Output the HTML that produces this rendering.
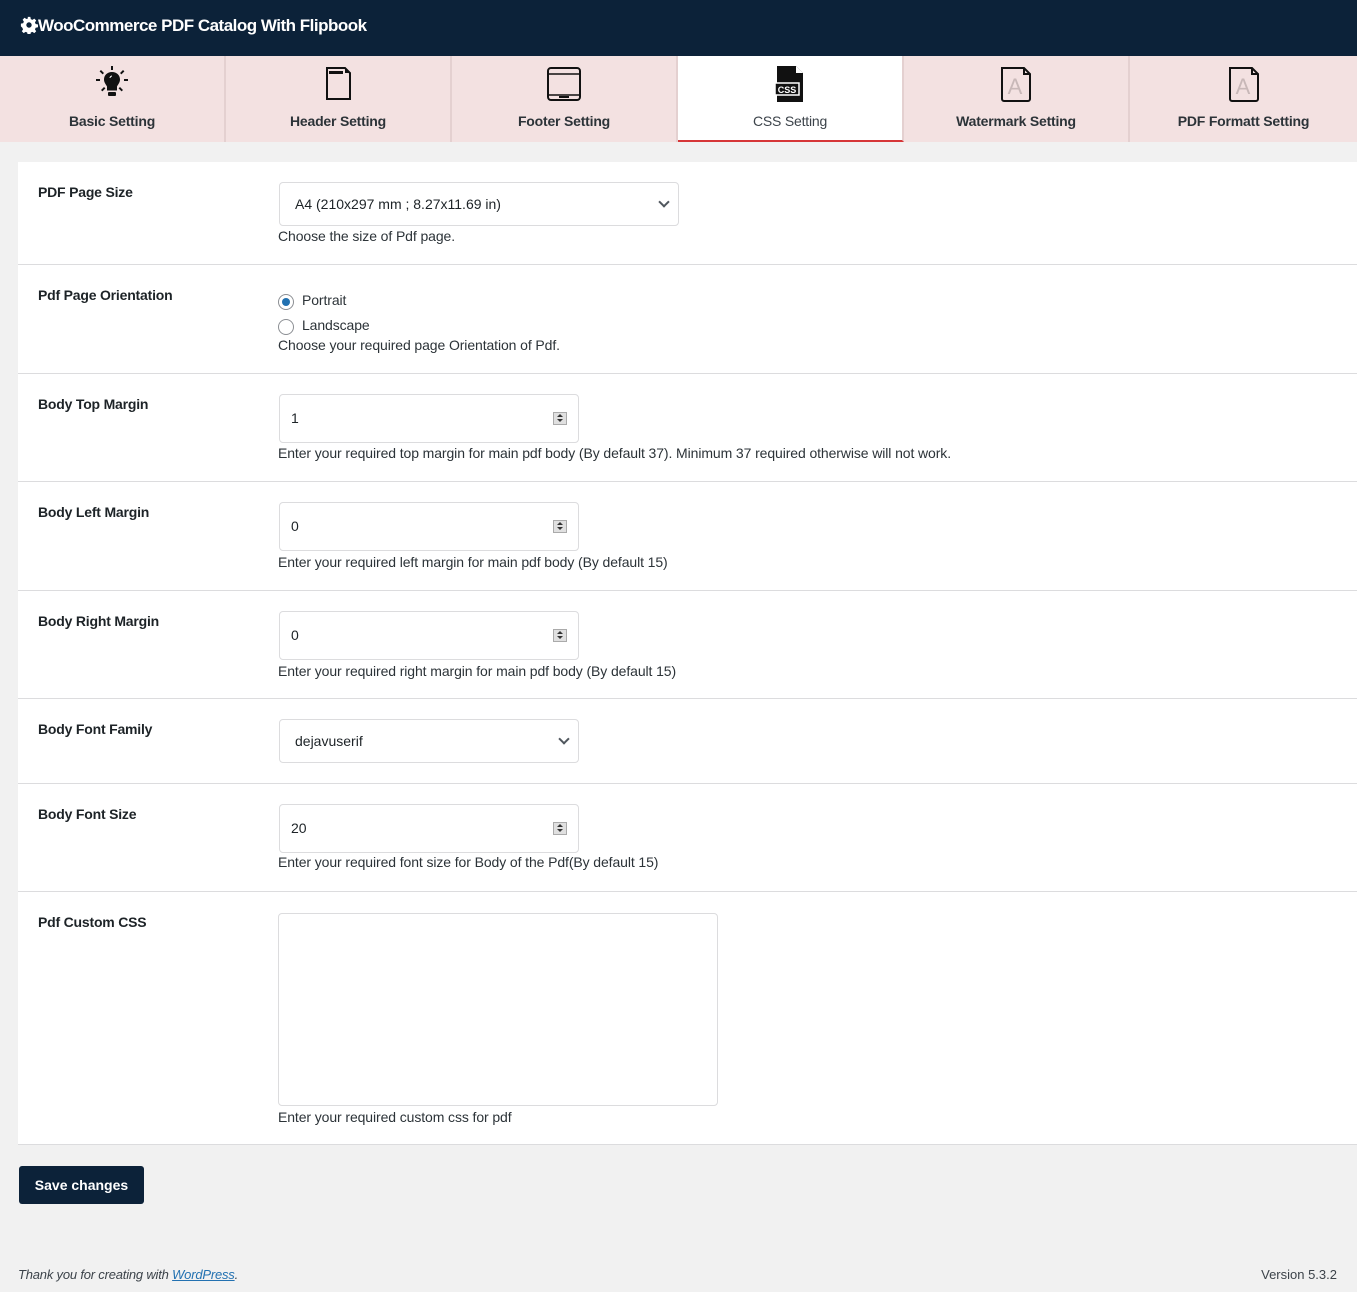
<!DOCTYPE html>
<html><head><meta charset="utf-8"><style>
*{box-sizing:border-box;margin:0;padding:0}
body{width:1357px;height:1292px;background:#f1f1f1;font-family:"Liberation Sans",sans-serif;font-size:14px;color:#1d2327;position:relative;overflow:hidden}
.hdr{position:absolute;left:0;top:0;width:1357px;height:56px;background:#0c2239;color:#fff;font-size:17px;font-weight:bold;padding:16px 0 0 20px;letter-spacing:-0.5px}
.tabs{position:absolute;left:0;top:56px;width:1357px;height:86px;background:#f3e1e1}
.tab{position:absolute;top:0;height:86px;width:226px;border-right:2px solid #e4d0d0;text-align:center}
.tab .lbl{position:absolute;top:57px;left:0;right:0;font-size:14px;font-weight:bold;color:#2c3338;letter-spacing:-0.2px}
.tab svg{position:absolute;top:10px;left:50%;margin-left:-18px}
.tab.act{background:#fff;border-bottom:2px solid #d63638}
.tab.act .lbl{font-weight:normal;color:#3c434a}
.panel{position:absolute;left:18px;top:162px;width:1339px;height:983px;background:#fff}
.row{position:absolute;left:0;width:1339px;border-bottom:1px solid #dcdcde}
.lab{position:absolute;left:20px;font-weight:bold;font-size:14px;letter-spacing:-0.2px}
.inp{position:absolute;width:300px;height:49px;border:1px solid #dcdcde;border-radius:4px;padding:15px 11px;font-size:14px}
.spin{position:absolute;right:11px;top:17px;width:14px;height:13px;background:#e0e0e0;border:1px solid #aaa}
.spin:before{content:"";position:absolute;left:3px;top:1px;border:3px solid transparent;border-bottom:3px solid #333;border-top:0}
.spin:after{content:"";position:absolute;left:3px;top:6px;border:3px solid transparent;border-top:3px solid #333;border-bottom:0}
.desc{position:absolute;font-size:14px;color:#2c3338;white-space:nowrap;letter-spacing:-0.1px}
.chev{position:absolute;right:10px;top:15px;width:8px;height:8px;border-right:2px solid #50575e;border-bottom:2px solid #50575e;transform:rotate(45deg)}
.radio{position:absolute;width:16px;height:16px;border:1px solid #8c8f94;border-radius:50%}
</style></head><body>
<div class="hdr"><svg width="18" height="18" viewBox="0 0 20 20" style="vertical-align:-3px"><path fill="#fff" d="M8.5 1h3l.5 2.5 1.8.8 2.1-1.4 2.1 2.1-1.4 2.1.8 1.8 2.6.6v3l-2.6.5-.8 1.8 1.4 2.1-2.1 2.1-2.1-1.4-1.8.8-.5 2.6h-3l-.5-2.6-1.8-.8-2.1 1.4-2.1-2.1 1.4-2.1-.8-1.8L1 11.5v-3l2.5-.5.8-1.8-1.4-2.1L5 2l2.1 1.4 1.8-.8zM10 7a3 3 0 1 0 0 6 3 3 0 0 0 0-6z"/></svg>WooCommerce PDF Catalog With Flipbook</div>
<div class="tabs">
<div class="tab" style="left:0"><svg width="36" height="36" viewBox="0 0 36 36"><g fill="#111"><path d="M18 6c-5 0-8 3.5-8 7.5 0 3 2 5 3 7v4h10v-4c1-2 3-4 3-7C26 9.5 23 6 18 6z"/><rect x="14" y="26" width="8" height="4" rx="1"/><rect x="17" y="0" width="2" height="4"/><rect x="2" y="13" width="4" height="2"/><rect x="30" y="13" width="4" height="2"/><path d="M7 4l3 3-1.4 1.4-3-3zM29 4l-3 3 1.4 1.4 3-3zM7 24l3-3 1.4 1.4-3 3zM29 24l-3-3-1.4 1.4 3 3z"/></g><path d="M16 12c0-1 1-2 2-2" stroke="#fff" fill="none"/></svg><div class="lbl">Basic Setting</div></div>
<div class="tab" style="left:226px"><svg width="36" height="36" viewBox="0 0 36 36"><path d="M7 2h18l5 5v26H7z" fill="none" stroke="#111" stroke-width="2"/><rect x="9" y="5" width="14" height="3" fill="#111"/><path d="M25 2v5h5" fill="#111"/></svg><div class="lbl">Header Setting</div></div>
<div class="tab" style="left:452px"><svg width="36" height="36" viewBox="0 0 36 36"><rect x="2" y="2" width="32" height="32" rx="3" fill="none" stroke="#111" stroke-width="2"/><line x1="2" y1="8" x2="34" y2="8" stroke="#111" stroke-width="1.5"/><line x1="2" y1="29" x2="34" y2="29" stroke="#111" stroke-width="1.5"/><rect x="13" y="30" width="10" height="2" fill="#111"/></svg><div class="lbl">Footer Setting</div></div>
<div class="tab act" style="left:678px"><svg width="36" height="36" viewBox="0 0 36 36"><path d="M5 0h19l7 7v29H5z" fill="#111"/><path d="M24 0v7h7z" fill="#fff"/><path d="M25 0l6 6" stroke="#fff"/><rect x="3" y="17" width="24" height="12" fill="#111" stroke="#fff" stroke-width="1.5"/><text x="15" y="27" font-size="9" font-weight="bold" fill="#fff" text-anchor="middle" font-family="Liberation Sans">CSS</text></svg><div class="lbl">CSS Setting</div></div>
<div class="tab" style="left:904px"><svg width="36" height="36" viewBox="0 0 36 36"><path d="M4 2h22l6 6v25a2 2 0 0 1-2 2H6a2 2 0 0 1-2-2z" fill="none" stroke="#111" stroke-width="2"/><path d="M26 2v6h6" fill="none" stroke="#111" stroke-width="2"/><text x="17" y="28" font-size="22" fill="#c8b8b8" text-anchor="middle" font-family="Liberation Sans">A</text></svg><div class="lbl">Watermark Setting</div></div>
<div class="tab" style="left:1130px;width:227px;border-right:0"><svg width="36" height="36" viewBox="0 0 36 36"><path d="M4 2h22l6 6v25a2 2 0 0 1-2 2H6a2 2 0 0 1-2-2z" fill="none" stroke="#111" stroke-width="2"/><path d="M26 2v6h6" fill="none" stroke="#111" stroke-width="2"/><text x="17" y="28" font-size="22" fill="#c8b8b8" text-anchor="middle" font-family="Liberation Sans">A</text></svg><div class="lbl">PDF Formatt Setting</div></div>
</div>

<div class="panel">
<div class="row" style="top:0;height:103px">
 <div class="lab" style="top:22px">PDF Page Size</div>
 <div class="inp" style="left:261px;top:20px;width:400px;height:44px;padding:13px 15px">A4 (210x297 mm ; 8.27x11.69 in)<div class="chev"></div></div>
 <div class="desc" style="left:260px;top:66px">Choose the size of Pdf page.</div>
</div>
<div class="row" style="top:103px;height:109px">
 <div class="lab" style="top:22px">Pdf Page Orientation</div>
 <div class="radio" style="left:260px;top:29px"><div style="position:absolute;left:3px;top:3px;width:8px;height:8px;border-radius:50%;background:#2271b1"></div></div>
 <div class="desc" style="left:284px;top:27px">Portrait</div>
 <div class="radio" style="left:260px;top:54px"></div>
 <div class="desc" style="left:284px;top:52px">Landscape</div>
 <div class="desc" style="left:260px;top:72px">Choose your required page Orientation of Pdf.</div>
</div>
<div class="row" style="top:212px;height:108px">
 <div class="lab" style="top:22px">Body Top Margin</div>
 <div class="inp" style="left:261px;top:20px">1<div class="spin"></div></div>
 <div class="desc" style="left:260px;top:71px">Enter your required top margin for main pdf body (By default 37). Minimum 37 required otherwise will not work.</div>
</div>
<div class="row" style="top:320px;height:109px">
 <div class="lab" style="top:22px">Body Left Margin</div>
 <div class="inp" style="left:261px;top:20px">0<div class="spin"></div></div>
 <div class="desc" style="left:260px;top:72px">Enter your required left margin for main pdf body (By default 15)</div>
</div>
<div class="row" style="top:429px;height:108px">
 <div class="lab" style="top:22px">Body Right Margin</div>
 <div class="inp" style="left:261px;top:20px">0<div class="spin"></div></div>
 <div class="desc" style="left:260px;top:72px">Enter your required right margin for main pdf body (By default 15)</div>
</div>
<div class="row" style="top:537px;height:85px">
 <div class="lab" style="top:22px">Body Font Family</div>
 <div class="inp" style="left:261px;top:20px;height:44px;padding:13px 15px">dejavuserif<div class="chev"></div></div>
</div>
<div class="row" style="top:622px;height:108px">
 <div class="lab" style="top:22px">Body Font Size</div>
 <div class="inp" style="left:261px;top:20px">20<div class="spin"></div></div>
 <div class="desc" style="left:260px;top:70px">Enter your required font size for Body of the Pdf(By default 15)</div>
</div>
<div class="row" style="top:730px;height:253px;border-bottom:1px solid #dcdcde">
 <div class="lab" style="top:22px">Pdf Custom CSS</div>
 <div class="inp" style="left:260px;top:21px;width:440px;height:193px"></div>
 <div class="desc" style="left:260px;top:217px">Enter your required custom css for pdf</div>
</div>
</div>

<div style="position:absolute;left:19px;top:1166px;width:125px;height:38px;background:#0c2239;color:#fff;border-radius:3px;font-weight:bold;font-size:14px;text-align:center;line-height:38px">Save changes</div>
<div style="position:absolute;left:18px;top:1267px;font-size:13px;font-style:italic;color:#3c434a;letter-spacing:-0.2px">Thank you for creating with <span style="color:#2271b1;text-decoration:underline">WordPress</span>.</div>
<div style="position:absolute;right:20px;top:1267px;font-size:13px;color:#3c434a">Version 5.3.2</div>
</body></html>
